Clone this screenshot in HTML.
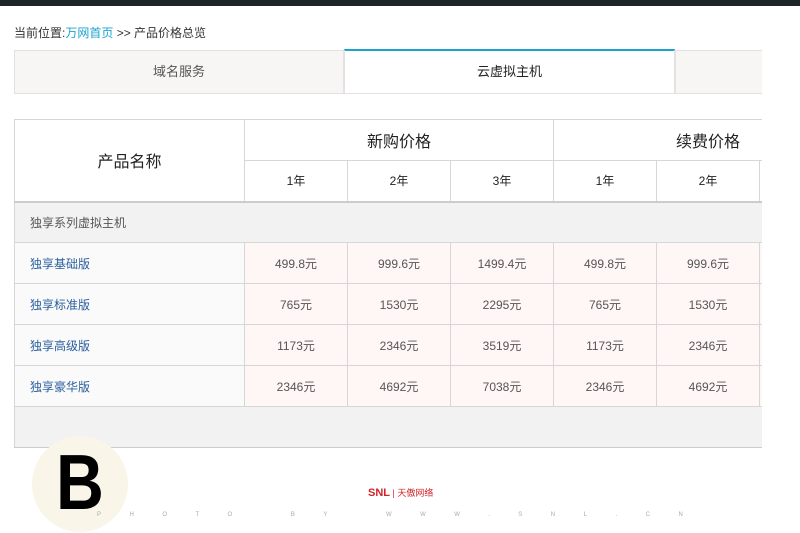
<!DOCTYPE html><html><head><meta charset="utf-8"><style>
body{margin:0;width:800px;height:533px;overflow:hidden;background:#fff;font-family:"Liberation Sans","Noto Sans CJK SC",sans-serif;position:relative}
.bar{position:absolute;left:0;top:0;width:800px;height:6px;background:#1e2529}
.bc{position:absolute;left:14px;top:24px;font-size:12px;color:#333}
.bc span{color:#1aa3d0}
.tab{position:absolute;top:50px;height:42px;line-height:42px;text-align:center;font-size:13px;color:#555;background:#f7f6f5;border:1px solid #e2e2e2}
.wrap{position:absolute;left:14px;top:119px;width:748px;height:330px;overflow:hidden}
table{border-collapse:collapse;font-size:12px;color:#555;table-layout:fixed;width:848px}
td{border:1px solid #d6d6d6;text-align:center;padding:0;overflow:hidden}
.h td{background:#fff;color:#222}
.n{text-align:left;padding-left:15px;color:#2a5e9e;background:#fafafa}
.d td.v{background:#fff7f5}
</style></head><body>
<div class="bar"></div>
<div class="bc">当前位置:<span>万网首页</span> &gt;&gt; 产品价格总览</div>
<div class="tab" style="left:14px;width:328px">域名服务</div>
<div class="tab" style="left:344px;width:329px;background:#fff;color:#222;border-top:2px solid #1aa3d0;top:49px">云虚拟主机</div>
<div class="tab" style="left:675px;width:86px;border-right:none"></div>
<div class="wrap"><table>
<colgroup><col style="width:230px"><col style="width:103px"><col style="width:103px"><col style="width:103px"><col style="width:103px"><col style="width:103px"><col style="width:103px"></colgroup>
<tr class="h" style="height:41px"><td rowspan="2" style="font-size:16px;border-bottom:2px solid #ccc">产品名称</td><td colspan="3" style="font-size:16px">新购价格</td><td colspan="3" style="font-size:16px">续费价格</td></tr>
<tr class="h" style="height:41px;border-bottom:2px solid #ccc"><td>1年</td><td>2年</td><td>3年</td><td>1年</td><td>2年</td><td>3年</td></tr>
<tr style="height:41px"><td colspan="7" style="text-align:left;padding-left:15px;background:#f2f2f2;color:#555">独享系列虚拟主机</td></tr>
<tr class="d" style="height:41px"><td class="n">独享基础版</td><td class="v">499.8元</td><td class="v">999.6元</td><td class="v">1499.4元</td><td class="v">499.8元</td><td class="v">999.6元</td><td class="v"></td></tr>
<tr class="d" style="height:41px"><td class="n">独享标准版</td><td class="v">765元</td><td class="v">1530元</td><td class="v">2295元</td><td class="v">765元</td><td class="v">1530元</td><td class="v"></td></tr>
<tr class="d" style="height:41px"><td class="n">独享高级版</td><td class="v">1173元</td><td class="v">2346元</td><td class="v">3519元</td><td class="v">1173元</td><td class="v">2346元</td><td class="v"></td></tr>
<tr class="d" style="height:41px"><td class="n">独享豪华版</td><td class="v">2346元</td><td class="v">4692元</td><td class="v">7038元</td><td class="v">2346元</td><td class="v">4692元</td><td class="v"></td></tr>
<tr style="height:41px"><td colspan="7" style="background:#f2f2f2;border-bottom:1px solid #ccc"></td></tr>
</table></div>
<div style="position:absolute;left:32px;top:436px;width:96px;height:96px;border-radius:50%;background:#f9f5e8"></div>
<div style="position:absolute;left:56px;top:432px;font-size:78px;font-weight:bold;line-height:100px;color:#000;transform:scaleX(0.85);transform-origin:left">B</div>
<div style="position:absolute;left:368px;top:486px;font-size:11px;font-weight:bold;color:#d2232a">SNL<span style="font-weight:normal;font-size:9px"> | 天傲网络</span></div>
<div style="position:absolute;left:97px;top:512px;font-size:6px;color:#aaa;letter-spacing:28.5px;white-space:nowrap">PHOTO BY WWW.SNL.CN</div>
</body></html>
